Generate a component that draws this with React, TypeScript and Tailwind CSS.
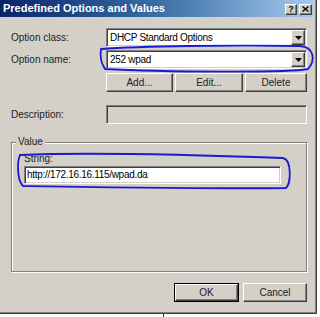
import React from "react";

const sunken =
  "border border-t-[#808080] border-l-[#808080] border-b-white border-r-white shadow-[inset_1px_1px_0_#404040,inset_-1px_-1px_0_#d4d0c8]";
const raised =
  "bg-[#d4d0c8] border border-t-white border-l-white border-b-[#404040] border-r-[#404040] shadow-[inset_-1px_-1px_0_#808080]";

function Combo({ value }: { value: string }) {
  return (
    <div className={`h-[19px] bg-white flex items-stretch ${sunken}`}>
      <span className="flex-1 pl-[3px] text-[10px] leading-[17px] tracking-[-0.3px] text-black">{value}</span>
      <div className={`w-[14px] m-[1px] flex items-center justify-center ${raised}`}>
        <svg width="7" height="4" viewBox="0 0 7 4">
          <path d="M0 0 L7 0 L3.5 4 Z" fill="#000" />
        </svg>
      </div>
    </div>
  );
}

function Button({ label, w, isDefault }: { label: string; w: string; isDefault?: boolean }) {
  return (
    <div className={`${w} h-[19px] ${isDefault ? "border border-black" : ""}`}>
      <div className={`h-full flex items-center justify-center text-[10px] text-[#222] ${raised}`}>{label}</div>
    </div>
  );
}

export default function App() {
  return (
    <div className="relative w-[320px] h-[317px] bg-white overflow-hidden font-['Liberation_Sans',Arial,sans-serif]">
      <div className="w-[317px] h-[314px] bg-[#d4d0c8] border-r border-b border-r-[#404040] border-b-[#404040] shadow-[inset_-1px_-1px_0_#808080] flex flex-col">
        {/* title bar */}
        <div className="h-[17px] mr-[2px] flex items-center justify-between bg-gradient-to-r from-[#0a246a] via-[#3a6ea5] to-[#a6caf0]">
          <span className="pl-[3px] text-[11px] font-bold text-white">Predefined Options and Values</span>
          <div className="flex gap-[2px] pr-[2px] pt-[1px]">
            <div className={`w-[12px] h-[11px] flex items-center justify-center text-[9px] font-bold leading-none text-black ${raised}`}>?</div>
            <div className={`w-[13px] h-[11px] flex items-center justify-center ${raised}`}>
              <svg width="7" height="6" viewBox="0 0 7 6">
                <path d="M0.5 0.5 L6.5 5.5 M6.5 0.5 L0.5 5.5" stroke="#000" strokeWidth="1.4" />
              </svg>
            </div>
          </div>
        </div>

        {/* body */}
        <div className="flex-1 flex flex-col pl-[11px] pr-[9px] text-[10px] text-[#222]">
          <div className="mt-[11px] grid grid-cols-[95px_1fr] gap-y-[3px] items-center">
            <span>Option class:</span>
            <Combo value="DHCP Standard Options" />
            <span>Option name:</span>
            <Combo value="252 wpad" />
            <span />
            <div className="flex gap-[2px] mt-[1px]">
              <Button label="Add..." w="w-[67px]" />
              <Button label="Edit..." w="w-[68px]" />
              <Button label="Delete" w="flex-1" />
            </div>
          </div>

          <div className="mt-[13px] grid grid-cols-[95px_1fr] items-center">
            <span>Description:</span>
            <div className={`h-[19px] bg-[#d4d0c8] ${sunken}`} />
          </div>

          {/* Value group */}
          <div className="relative mt-[18px] h-[130px] border border-[#808080] shadow-[1px_1px_0_#fff,inset_1px_1px_0_#fff] pl-[12px] pr-[25px] pt-[10px]">
            <span className="absolute -top-[7px] left-[4px] px-[2px] bg-[#d4d0c8] leading-[12px]">Value</span>
            <div className="leading-[12px]">String:</div>
            <div className={`mt-[1px] h-[18px] bg-white pl-[2px] leading-[16px] tracking-[-0.3px] text-black ${sunken}`}>http://172.16.16.115/wpad.da</div>
          </div>

          <div className="mt-[11px] flex justify-end gap-[4px]">
            <Button label="OK" w="w-[65px]" isDefault />
            <Button label="Cancel" w="w-[64px]" />
          </div>
        </div>
      </div>
      <div className="absolute left-[163px] top-[314px] w-[1px] h-[3px] bg-[#333]" />

      {/* hand-drawn marker highlights */}
      <svg className="absolute left-0 top-0 pointer-events-none" width="320" height="317" viewBox="0 0 320 317">
        <path
          d="M101 49 C140 46, 230 45, 300 46 C314 47, 316 60, 308 69 C290 73, 160 72, 105 69 C101 63, 100 55, 101 49"
          fill="none"
          stroke="#1a1ad2"
          strokeWidth="1.8"
          strokeLinecap="round"
        />
        <path
          d="M20 155 C90 152, 200 155, 283 158 C292 160, 291 184, 286 188 C220 189, 90 187, 23 186 C17 180, 17 162, 20 155"
          fill="none"
          stroke="#1a1ad2"
          strokeWidth="1.8"
          strokeLinecap="round"
        />
      </svg>
    </div>
  );
}
